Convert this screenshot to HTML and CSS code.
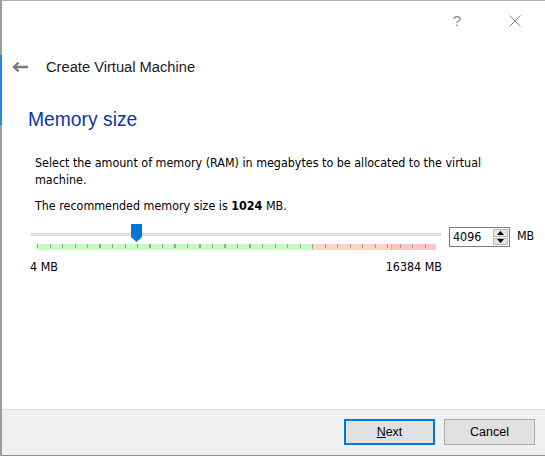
FILE: index.html
```html
<!DOCTYPE html>
<html>
<head>
<meta charset="utf-8">
<link rel="stylesheet" href="styles.css">
</head>
<body>
<div class="window">
  <div class="titlebar">
    <div class="tb-btn help">?</div>
    <div class="tb-btn close">
      <svg width="12" height="12" viewBox="0 0 12 12"><path d="M0.5 0.5 L11.5 11.5 M11.5 0.5 L0.5 11.5" stroke="#8a8a8a" stroke-width="1" fill="none"/></svg>
    </div>
  </div>
  <div class="header">
    <svg class="back" width="16" height="12" viewBox="0 0 16 12"><path d="M2 6 H16 M6.5 1.5 L2 6 L6.5 10.5" stroke="#7b7b7b" stroke-width="2.4" fill="none"/></svg>
    <span class="header-title">Create Virtual Machine</span>
  </div>
  <div class="content">
    <h1 class="page-title">Memory size</h1>
    <p class="desc">Select the amount of memory (RAM) in megabytes to be allocated to the virtual machine.</p>
    <p class="desc rec">The recommended memory size is <b>1024</b> MB.</p>
    <div class="slider-row">
      <div class="slider">
        <div class="track"></div>
        <div class="thumb" style="left: 100px"></div>
        <div class="ticks"></div>
      </div>
      <div class="spinbox">
        <span class="spin-value">4096</span>
        <div class="spin-btns">
          <div class="spin-btn"><svg width="7" height="4" viewBox="0 0 7 4"><path d="M0 4 L3.5 0 L7 4 Z" fill="#000"/></svg></div>
          <div class="spin-btn"><svg width="7" height="4" viewBox="0 0 7 4"><path d="M0 0 L3.5 4 L7 0 Z" fill="#000"/></svg></div>
        </div>
      </div>
      <span class="unit">MB</span>
    </div>
    <div class="range-labels">
      <span>4 MB</span>
      <span>16384 MB</span>
    </div>
  </div>
  <div class="footer">
    <button class="btn btn-default"><u>N</u>ext</button>
    <button class="btn">Cancel</button>
  </div>
</div>
</body>
</html>
```
FILE: styles.css
```css
html, body {
  margin: 0;
  padding: 0;
  background: #ffffff;
}
body {
  width: 545px;
  height: 456px;
  overflow: hidden;
}
.window {
  position: relative;
  height: 456px;
  box-sizing: border-box;
  border-left: 2px solid #9c9c9c;
  border-top: 1px solid #adadad;
  border-bottom: 1px solid #8e8e8e;
  display: flex;
  flex-direction: column;
  background: #ffffff;
}
.window::before {
  content: "";
  position: absolute;
  left: -2px;
  top: 54px;
  width: 2px;
  height: 70px;
  background: #2a86e0;
}
.titlebar {
  height: 39px;
  display: flex;
  justify-content: flex-end;
  align-items: center;
  padding-right: 7px;
  gap: 12px;
}
.tb-btn {
  width: 46px;
  height: 39px;
  display: flex;
  align-items: center;
  justify-content: center;
  color: #8a8a8a;
  font-family: "Liberation Sans", sans-serif;
  font-size: 15px;
}
.header {
  height: 54px;
  display: flex;
  align-items: center;
  padding-left: 10px;
}
.back {
  margin-right: 18px;
}
.header-title {
  font-family: "Liberation Sans", sans-serif;
  font-size: 14.7px;
  color: #1a1a1a;
}
.content {
  display: flex;
  flex-direction: column;
}
.page-title {
  margin: 13px 0 0 26px;
  font-family: "Liberation Sans", sans-serif;
  font-weight: normal;
  font-size: 19.3px;
  line-height: 26px;
  color: #0b36a8;
}
.desc {
  margin: 21px 0 0 33px;
  width: 470px;
  font-family: "DejaVu Sans Condensed", "DejaVu Sans", sans-serif;
  font-stretch: condensed;
  font-size: 12.4px;
  line-height: 17px;
  color: #000;
}
.desc.rec {
  margin-top: 9px;
}
.slider-row {
  margin: 10px 0 0 29px;
  display: flex;
  align-items: flex-start;
}
.slider {
  position: relative;
  width: 410px;
  height: 27px;
}
.track {
  margin-top: 9px;
  height: 1px;
  background: #e7e7e7;
  border: 1px solid #d6d6d6;
  border-left-color: #dcdcdc;
}
.thumb {
  position: absolute;
  top: 0;
  width: 11px;
  height: 18px;
  background: #0078d7;
  clip-path: polygon(0 0, 100% 0, 100% 72%, 50% 100%, 0 72%);
}
.ticks {
  margin: 8px 0 0 5px;
  width: 400px;
  height: 6px;
  background-image:
    repeating-linear-gradient(to right, #a39b94 0 1px, transparent 1px 12.5px),
    linear-gradient(to right, #c3fdc3 0 276px, #9bd89b 276px 277px, #ffd6c2 277px 355px, #f0a0a0 355px 356px, #ffc5c5 356px 400px);
  background-size: 400px 4px, 400px 6px;
  background-position: 1px 0, 0 0;
  background-repeat: no-repeat;
}
.spinbox {
  margin: 3px 0 0 8px;
  width: 61px;
  height: 20px;
  box-sizing: border-box;
  border: 1px solid #7a7a7a;
  display: flex;
  align-items: stretch;
  background: #fff;
}
.spin-value {
  flex: 1;
  padding-left: 3px;
  font-family: "DejaVu Sans Condensed", "DejaVu Sans", sans-serif;
  font-stretch: condensed;
  font-size: 12.4px;
  line-height: 18px;
  color: #000;
}
.spin-btns {
  width: 15px;
  margin: 1px 1px 1px 0;
  display: flex;
  flex-direction: column;
  gap: 1px;
}
.spin-btn {
  flex: 1;
  background: #e5e5e5;
  border: 1px solid #b9b9b9;
  display: flex;
  align-items: center;
  justify-content: center;
}
.unit {
  margin: 4px 0 0 7px;
  font-family: "DejaVu Sans Condensed", "DejaVu Sans", sans-serif;
  font-stretch: condensed;
  font-size: 12.4px;
  line-height: 15px;
  color: #000;
}
.range-labels {
  margin: 8px 0 0 28px;
  width: 412px;
  display: flex;
  justify-content: space-between;
  font-family: "DejaVu Sans Condensed", "DejaVu Sans", sans-serif;
  font-stretch: condensed;
  font-size: 12.4px;
  line-height: 15px;
  color: #000;
}
.footer {
  margin-top: auto;
  height: 46px;
  box-sizing: border-box;
  border-top: 1px solid #dcdcdc;
  background: #f0f0f0;
  display: flex;
  justify-content: flex-end;
  align-items: flex-start;
  padding: 9px 10px 0 0;
  gap: 9px;
}
.btn {
  width: 91px;
  height: 26px;
  box-sizing: border-box;
  margin: 0;
  padding: 0;
  background: #e1e1e1;
  border: 1px solid #adadad;
  font-family: "Liberation Sans", sans-serif;
  font-size: 12.5px;
  color: #000;
}
.btn-default {
  border: 2px solid #0078d7;
}
```
